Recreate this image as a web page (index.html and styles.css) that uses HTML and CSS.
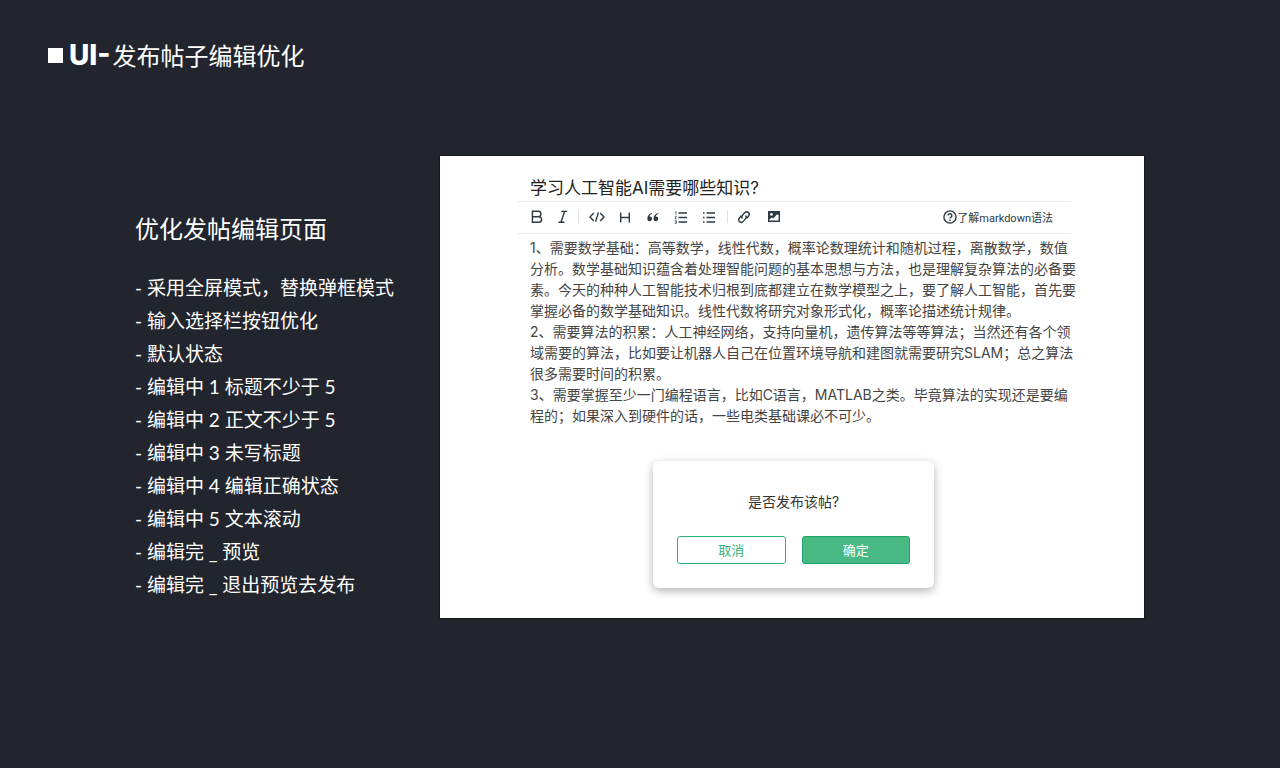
FILE: index.html
```html
<!DOCTYPE html>
<html lang="zh-CN">
<head>
<meta charset="utf-8">
<meta name="viewport" content="width=device-width, initial-scale=1">
<title>UI-发布帖子编辑优化</title>
<link rel="stylesheet" href="styles.css">
</head>
<body>
<header class="page-header">
  <span class="marker"></span>
  <h1 class="page-title"><span class="latin">UI-</span>发布帖子编辑优化</h1>
</header>
<main class="layout">
  <section class="notes">
    <h2 class="notes-title">优化发帖编辑页面</h2>
    <ul class="notes-list">
      <li>- 采用全屏模式，替换弹框模式</li>
      <li>- 输入选择栏按钮优化</li>
      <li>- 默认状态</li>
      <li>- 编辑中 1 标题不少于 5</li>
      <li>- 编辑中 2 正文不少于 5</li>
      <li>- 编辑中 3 未写标题</li>
      <li>- 编辑中 4 编辑正确状态</li>
      <li>- 编辑中 5 文本滚动</li>
      <li>- 编辑完 _ 预览</li>
      <li>- 编辑完 _ 退出预览去发布</li>
    </ul>
  </section>
  <section class="editor">
    <input class="post-title" type="text" aria-label="标题" value="学习人工智能AI需要哪些知识?">
    <div class="toolbar">
      <div class="tools tools-text">
        <button type="button" aria-label="粗体"><svg viewBox="0 0 14 14"><path d="M2.4 1.3h5.8a2.7 2.7 0 0 1 0 5.4H2.4zM2.4 6.7h6.4a2.8 2.8 0 0 1 0 5.6H2.4z"/></svg></button>
        <button type="button" aria-label="斜体"><svg viewBox="0 0 14 14"><path d="M5.2 1.4h6M2.4 12.2h6M8.6 1.4 5 12.2"/></svg></button>
      </div>
      <span class="divider"></span>
      <div class="tools tools-block">
        <button type="button" aria-label="代码"><svg class="wide" viewBox="0 0 16 14"><path d="M4.8 3 1 7l3.8 4M11.2 3 15 7l-3.8 4M9.4 2.4 6.6 11.6"/></svg></button>
        <button type="button" aria-label="标题"><svg viewBox="0 0 14 14"><path d="M2.7 2.4v10.2M11.3 2.4v10.2M2.7 7.5h8.6"/></svg></button>
        <button type="button" aria-label="引用"><svg viewBox="0 0 14 14"><g class="solid"><path d="M6 3C3.2 3.7 1.3 6 1.3 8.9a2.4 2.4 0 1 0 2.2-2.5C3.8 5.2 4.7 4.4 6 4z"/><path d="M12.2 3c-2.8.7-4.7 3-4.7 5.9a2.4 2.4 0 1 0 2.2-2.5c.3-1.2 1.2-2 2.5-2.4z"/></g></svg></button>
        <button type="button" aria-label="有序列表"><svg viewBox="0 0 14 14"><path d="M4.5 3H13M4.5 7.5H13M4.5 12H13"/><path class="fine" d="M1 1.8h1v2.8M.8 6.3h1.7L1 8.6h1.7M.8 10.6h1.6v2.8H.8M1 12h1.3"/></svg></button>
        <button type="button" aria-label="无序列表"><svg viewBox="0 0 14 14"><path d="M4.5 3H13M4.5 7.5H13M4.5 12H13M1 3h1.5M1 7.5h1.5M1 12h1.5"/></svg></button>
      </div>
      <span class="divider"></span>
      <div class="tools tools-media">
        <button type="button" aria-label="链接"><svg viewBox="0 0 14 14"><path d="M5.5 8.6a2.5 2.5 0 0 1 0-3.4l2.2-2.5a2.5 2.5 0 0 1 3.9 3.3l-1.9 2.2M8.5 5.5a2.5 2.5 0 0 1 0 3.4l-2.2 2.5A2.5 2.5 0 0 1 2.4 8l1.9-2.2"/></svg></button>
        <button type="button" aria-label="图片"><svg viewBox="0 0 14 14"><path d="M1.7 1.7h10.6v9.6H1.7z"/><path class="solid" d="M1 1h12v4L9.9 4.4 6.3 8.6 4.9 7.4 2.2 9.6H1z"/><circle class="hole" cx="4.4" cy="4.4" r="1.4"/></svg></button>
      </div>
      <a class="help" href="#markdown"><svg viewBox="0 0 14 14"><circle cx="7" cy="7" r="6.1"/><path d="M5.1 5.6a1.9 1.9 0 1 1 2.6 1.8c-.5.2-.7.5-.7 1.1M7 9.6v1.2"/></svg>了解markdown语法</a>
    </div>
    <textarea class="post-body" aria-label="正文" rows="9" spellcheck="false">1、需要数学基础：高等数学，线性代数，概率论数理统计和随机过程，离散数学，数值
分析。数学基础知识蕴含着处理智能问题的基本思想与方法，也是理解复杂算法的必备要
素。今天的种种人工智能技术归根到底都建立在数学模型之上，要了解人工智能，首先要
掌握必备的数学基础知识。线性代数将研究对象形式化，概率论描述统计规律。
2、需要算法的积累：人工神经网络，支持向量机，遗传算法等等算法；当然还有各个领
域需要的算法，比如要让机器人自己在位置环境导航和建图就需要研究SLAM；总之算法
很多需要时间的积累。
3、需要掌握至少一门编程语言，比如C语言，MATLAB之类。毕竟算法的实现还是要编
程的；如果深入到硬件的话，一些电类基础课必不可少。</textarea>
    <div class="dialog" role="dialog" aria-labelledby="dialog-text">
      <p class="dialog-text" id="dialog-text">是否发布该帖?</p>
      <div class="dialog-actions">
        <button class="btn btn-cancel" type="button">取消</button>
        <button class="btn btn-confirm" type="button">确定</button>
      </div>
    </div>
  </section>
</main>
</body>
</html>
```
FILE: styles.css
```css
* { box-sizing: border-box; }

body {
  margin: 0;
  background: #22252d;
  color: #fff;
  font-family: "Noto Sans CJK SC", sans-serif;
}

button, input, textarea { font-family: inherit; }

h1, h2, p, ul { margin: 0; padding: 0; font-weight: 400; }

.page-header {
  display: flex;
  align-items: center;
  gap: 6px;
  padding: 35px 48px 0;
}

.marker { width: 15px; height: 15px; background: #fff; }

.page-title {
  display: flex;
  align-items: center;
  gap: 2px;
  font-size: 24px;
  line-height: 40px;
}

.latin { font-family: Inter, sans-serif; font-size: 28px; font-weight: 800; }

.layout {
  display: flex;
  align-items: flex-start;
  padding: 81px 136px 40px 135px;
}

.notes { flex: none; width: 305px; padding-top: 54px; }

.notes-title { font-size: 24px; line-height: 36px; }

.notes-list {
  margin-top: 25px;
  list-style: none;
  font-family: Lato, "Noto Sans CJK SC", sans-serif;
  font-size: 19px;
  line-height: 33px;
  white-space: nowrap;
}

.editor {
  flex: 1;
  min-width: 0;
  padding: 16px 74px 30px 77px;
  background: #fff;
  color: #333;
  font-family: Inter, "Noto Sans CJK SC", sans-serif;
  box-shadow: 0 0 2px #000;
}

.post-title {
  display: block;
  width: 100%;
  height: 29px;
  padding: 0 13px 1px;
  border: 0;
  background: none;
  color: #222;
  font-size: 17px;
}

.toolbar {
  display: flex;
  align-items: center;
  height: 33px;
  padding: 0 17px 2px 7px;
  border: solid #ececec;
  border-width: 1px 0;
}

.tools { display: flex; }
.tools-block { margin-left: 4px; }
.tools-media { gap: 2px; margin-left: 2px; }

.tools button {
  display: grid;
  place-items: center;
  width: 28px;
  height: 28px;
  padding: 0;
  border: 0;
  background: none;
}

.tools-text button { width: 26px; }

.divider { width: 1px; height: 13px; margin-left: 2px; background: #e2e2e2; }
.tools-block + .divider { margin-left: 4px; }

svg {
  width: 14px;
  height: 14px;
  fill: none;
  stroke: #2c3a44;
  stroke-width: 1.4;
}

.wide { width: 16px; }
.solid { fill: #2c3a44; stroke: none; }
.hole { fill: #fff; stroke: none; }
.fine { stroke-width: 0.7; }

.help {
  display: flex;
  align-items: center;
  margin-left: auto;
  color: #2c3a44;
  font-family: Roboto, "Noto Sans CJK SC", sans-serif;
  font-size: 11px;
  text-decoration: none;
  white-space: nowrap;
}

.post-body {
  display: block;
  width: calc(100% + 20px);
  margin-top: 3px;
  padding: 0 0 0 13px;
  border: 0;
  background: none;
  color: #444;
  font-size: 14px;
  line-height: 21px;
  white-space: pre;
  overflow: hidden;
  resize: none;
}

.dialog {
  width: 281px;
  margin: 35px auto 0;
  padding: 29px 24px 24px;
  border-radius: 6px;
  background: #fff;
  box-shadow: 0 3px 10px rgba(0, 0, 0, 0.3);
}

.dialog-text {
  color: #333;
  font-size: 14px;
  line-height: 24px;
  text-align: center;
}

.dialog-actions { display: flex; gap: 16px; margin-top: 22px; }

.btn {
  flex: 1;
  height: 28px;
  padding: 0;
  border: 1px solid #2eb378;
  border-radius: 3px;
  font-size: 13px;
  line-height: 24px;
}

.btn-cancel { background: #fff; color: #2eb378; }
.btn-confirm { border-color: #21a567; background: #48b884; color: #fff; }
```
